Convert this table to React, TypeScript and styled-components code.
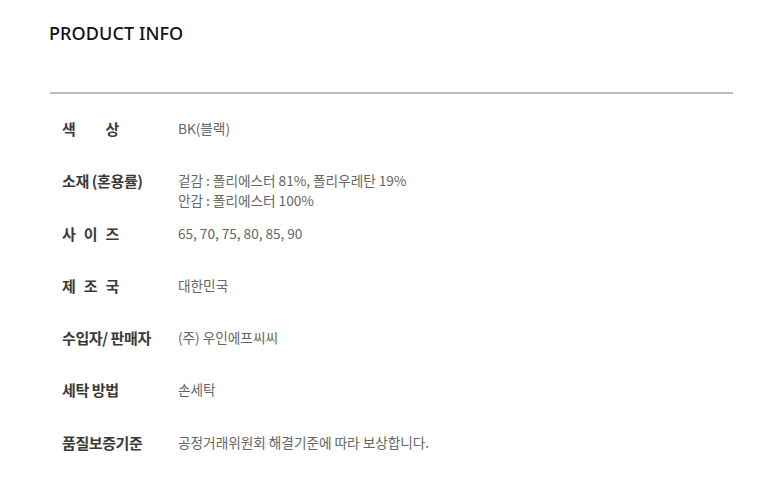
import React from "react";
import styled, { createGlobalStyle } from "styled-components";

const GlobalStyle = createGlobalStyle`
  html, body {
    margin: 0;
    padding: 0;
    background: #fff;
  }
  body {
    font-family: "Noto Sans CJK KR", "Noto Sans", sans-serif;
  }
`;

type Row = {
  label: string;
  spread?: boolean;
  values: string[];
};

const rows: Row[] = [
  { label: "색상", spread: true, values: ["BK(블랙)"] },
  { label: "소재 (혼용률)", values: ["겉감 : 폴리에스터 81%, 폴리우레탄 19%", "안감 : 폴리에스터 100%"] },
  { label: "사이즈", spread: true, values: ["65, 70, 75, 80, 85, 90"] },
  { label: "제조국", spread: true, values: ["대한민국"] },
  { label: "수입자/ 판매자", values: ["(주) 우인에프씨씨"] },
  { label: "세탁 방법", values: ["손세탁"] },
  { label: "품질보증기준", values: ["공정거래위원회 해결기준에 따라 보상합니다."] },
];

const App: React.FC = () => {
  return (
    <>
      <GlobalStyle />
      <Wrapper>
        <Title>PRODUCT INFO</Title>
        <Divider />
        <InfoList>
          {rows.map((row) => (
            <InfoRow key={row.label}>
              <Label spread={row.spread}>
                {row.spread
                  ? row.label.split("").map((ch, i) => <span key={i}>{ch}</span>)
                  : row.label}
              </Label>
              <Value>
                {row.values.map((v) => (
                  <div key={v}>{v}</div>
                ))}
              </Value>
            </InfoRow>
          ))}
        </InfoList>
      </Wrapper>
    </>
  );
};

const Wrapper = styled.div`
  padding: 20px 47px 0 49px;
`;

const Title = styled.h2`
  margin: 0;
  font-family: "Noto Sans", "Liberation Sans", sans-serif;
  font-size: 18px;
  font-weight: 500;
  line-height: 26px;
  color: #111;
  letter-spacing: 0.1px;
`;

const Divider = styled.hr`
  margin: 46px 0 0 1px;
  border: none;
  height: 2px;
  background: #bdbdbd;
`;

const InfoList = styled.div`
  padding: 25px 0 0 13px;
`;

const InfoRow = styled.div`
  display: grid;
  grid-template-columns: 116px 1fr;
  align-items: start;
  height: 52.3px;
`;

const Label = styled.div<{ spread?: boolean }>`
  display: flex;
  justify-content: ${(p) => (p.spread ? "space-between" : "flex-start")};
  width: ${(p) => (p.spread ? "57px" : "auto")};
  font-size: 15px;
  font-weight: 700;
  line-height: 20px;
  color: #3a3a3a;
  letter-spacing: -0.4px;
  white-space: pre;
`;

const Value = styled.div`
  margin-top: -1px;
  font-size: 13.7px;
  line-height: 20px;
  color: #666;
  letter-spacing: -0.05px;
`;

export default App;
